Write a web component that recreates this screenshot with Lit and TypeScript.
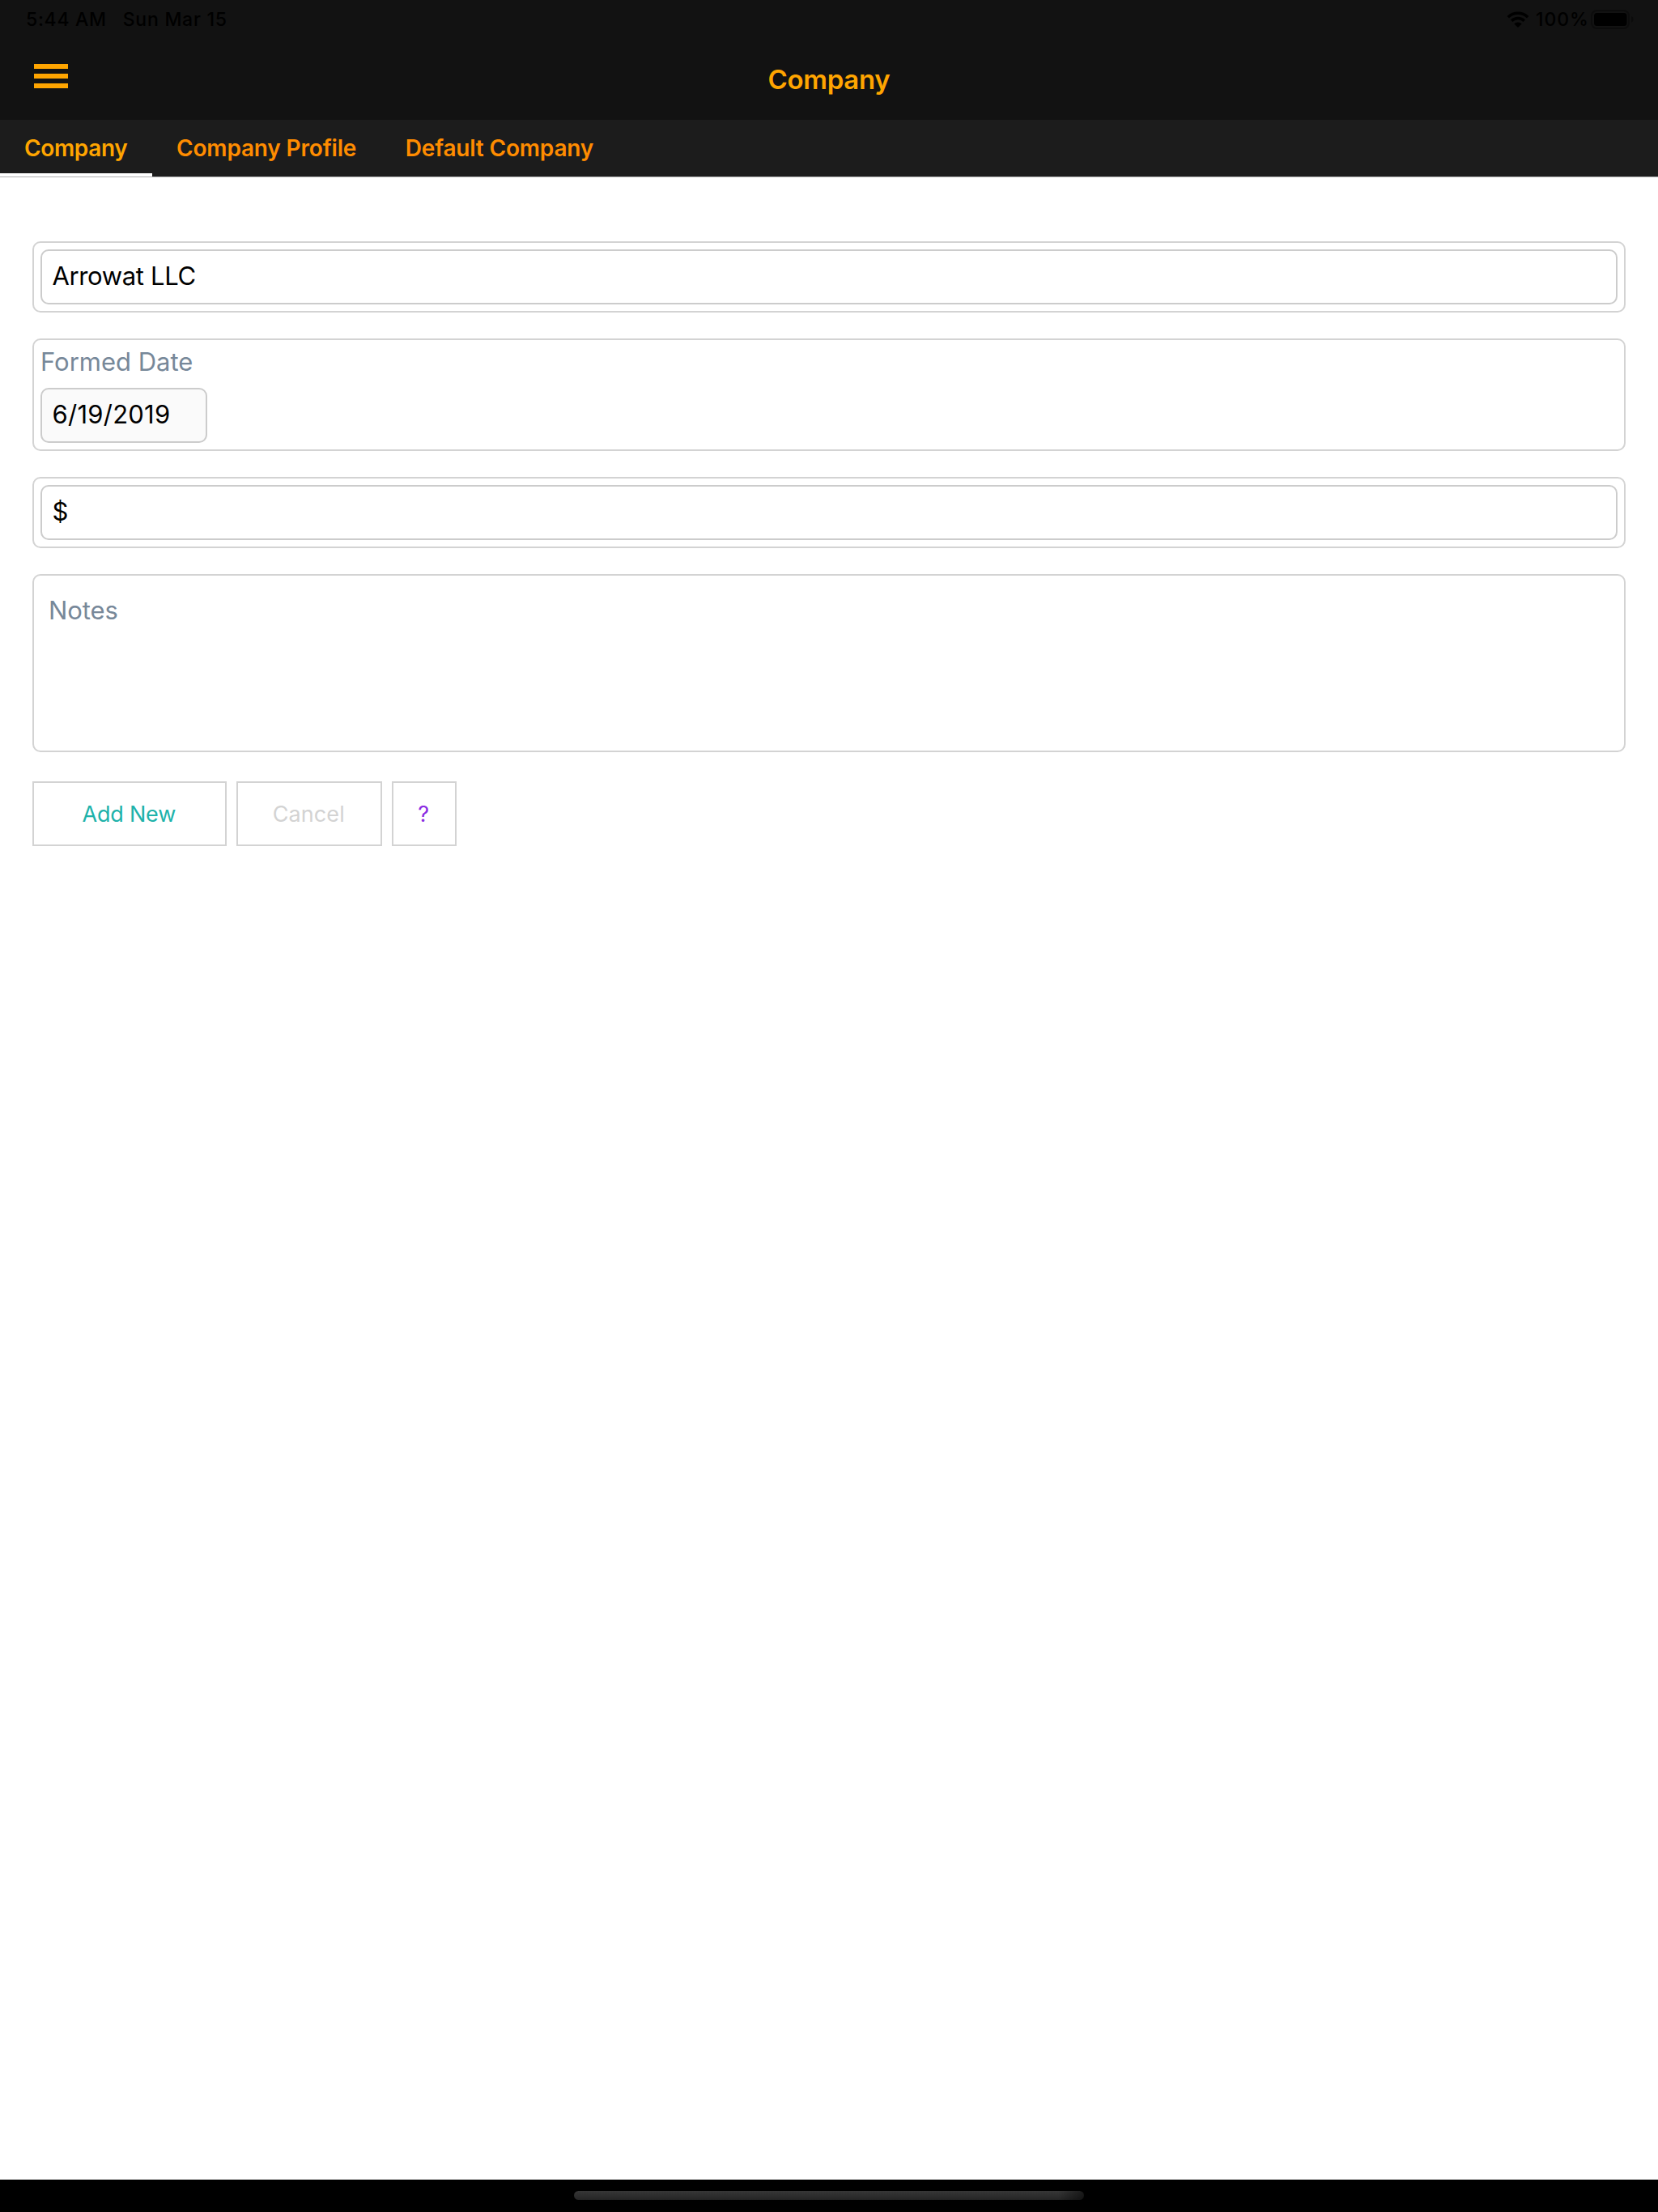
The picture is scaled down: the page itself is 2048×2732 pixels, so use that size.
import { LitElement, html, css } from "lit";
import { customElement, property } from "lit/decorators.js";

@customElement("status-bar")
class StatusBar extends LitElement {
  static styles = css`
    :host { display: flex; justify-content: space-between; align-items: center; height: 48px; padding: 0 30px 0 32px; box-sizing: border-box; color: #000; font-size: 23px; font-weight: 500; line-height: 48px; white-space: nowrap; }
    .side { display: flex; align-items: center; }
    .time { letter-spacing: 0.7px; margin-right: 20px; }
    .date { letter-spacing: 0.75px; }
    .level { letter-spacing: 0.92px; margin: 0 2.2px 0 8.3px; }
    svg { display: block; }
  `;
  render() {
    return html`
      <div class="side"><span class="time">5:44 AM</span><span class="date">Sun Mar 15</span></div>
      <div class="side">
        <svg width="28" height="20" viewBox="0 0 28 20">
          <path d="M1.8 7.2A17.5 17.5 0 0 1 26.2 7.2M6.2 11.7A11.2 11.2 0 0 1 21.8 11.7" fill="none" stroke="#000" stroke-width="3.5" />
          <path d="M14 20L9.3 15.4A6.7 6.7 0 0 1 18.7 15.4Z" fill="#000" />
        </svg>
        <span class="level">100%</span>
        <svg width="53" height="24" viewBox="0 0 53 24">
          <rect x="1" y="1" width="46" height="22" rx="6.5" fill="none" stroke="#0c0c0c" stroke-width="2" />
          <rect x="4" y="4" width="40.5" height="16" rx="3.5" fill="#000" />
          <path d="M50 8A4.4 4.4 0 0 1 50 16Z" fill="#0b0b0b" />
        </svg>
      </div>
    `;
  }
}

@customElement("tab-bar")
class TabBar extends LitElement {
  static styles = css`
    :host { display: flex; height: 70px; background: #1c1c1c; border-bottom: 1px solid #aeaeb0; font-size: 28px; font-weight: 600; line-height: 70px; white-space: nowrap; }
    .tab { box-sizing: border-box; height: 70px; padding: 0 30.5px 0 30px; color: #ff8c00; letter-spacing: -0.17px; }
    .active { width: 188px; color: #ffa500; letter-spacing: -0.34px; background: linear-gradient(#fff, #fff) bottom / 100% 4px no-repeat; }
  `;
  @property({ attribute: false }) tabs: string[] = [];
  render() {
    return this.tabs.map((t, i) => html`<div class="tab ${i === 0 ? "active" : ""}">${t}</div>`);
  }
}

@customElement("app-root")
class AppRoot extends LitElement {
  static styles = css`
    :host { display: flex; flex-direction: column; height: 2732px; background: #fff; color: #000; font-family: "Inter", "Liberation Sans", sans-serif; }
    .header { background: #121212; height: 148px; }
    .nav { display: grid; grid-template-columns: 1fr auto 1fr; align-items: center; height: 100px; padding: 0 42px; box-sizing: border-box; }
    .menu { display: flex; flex-direction: column; gap: 6px; width: 42px; margin-bottom: 8px; }
    .bar { height: 6px; background: #ffa500; }
    .title { color: #ffa500; font-size: 33px; font-weight: 600; letter-spacing: -0.3px; line-height: 40px; }
    .form { display: flex; flex-direction: column; padding: 79px 40px 0; flex: 1; font-size: 31px; }
    .card { box-sizing: border-box; border: 2px solid #d3d3d3; border-radius: 10px; padding: 8px; margin-bottom: 32px; }
    .input { box-sizing: border-box; height: 68px; border: 2px solid #ccc; border-radius: 10px; padding: 0 12.5px; line-height: 61px; }
    .name { letter-spacing: -0.36px; }
    .date { width: 206px; background: #fafafa; letter-spacing: 0.25px; }
    .label { color: #778899; height: 51px; line-height: 37px; }
    .notes { height: 220px; padding: 24px 18px; color: #778899; line-height: 37px; letter-spacing: -0.1px; }
    .actions { display: flex; gap: 12px; margin-top: 4px; font-size: 27px; }
    .button { box-sizing: border-box; height: 80px; border: 2px solid #d3d3d3; padding-right: 1.5px; line-height: 78px; text-align: center; }
    .add { width: 240px; color: #20b2aa; letter-spacing: -0.2px; }
    .cancel { width: 180px; color: #d3d3d3; letter-spacing: 0.1px; }
    .help { width: 80px; color: #8a2be2; }
    .dock { display: flex; justify-content: center; height: 40px; padding-top: 14px; box-sizing: border-box; background: #000; }
    .grip { width: 630px; height: 11px; border-radius: 6px; background: linear-gradient(90deg, transparent 95%, #0008), linear-gradient(#363636, #262626); }
  `;
  render() {
    return html`
      <div class="header">
        <status-bar></status-bar>
        <div class="nav">
          <div class="menu"><div class="bar"></div><div class="bar"></div><div class="bar"></div></div>
          <div class="title">Company</div>
        </div>
      </div>
      <tab-bar .tabs=${["Company", "Company Profile", "Default Company"]}></tab-bar>
      <div class="form">
        <div class="card"><div class="input name">Arrowat LLC</div></div>
        <div class="card"><div class="label">Formed Date</div><div class="input date">6/19/2019</div></div>
        <div class="card"><div class="input">$</div></div>
        <div class="card notes">Notes</div>
        <div class="actions">
          <div class="button add">Add New</div>
          <div class="button cancel">Cancel</div>
          <div class="button help">?</div>
        </div>
      </div>
      <div class="dock"><div class="grip"></div></div>
    `;
  }
}
